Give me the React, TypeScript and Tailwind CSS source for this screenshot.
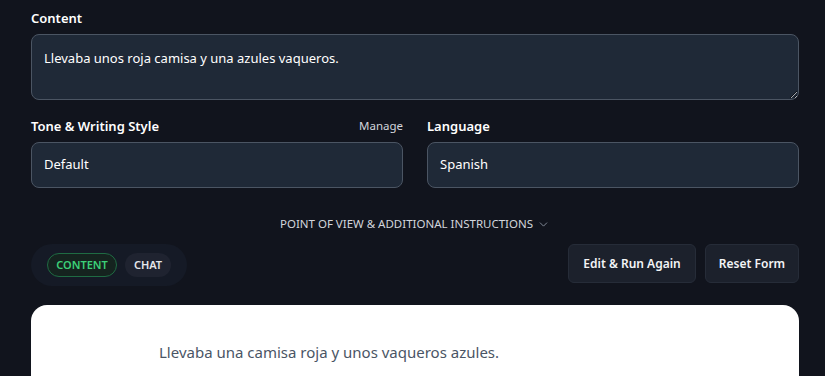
import { ChevronDown } from 'lucide-react'

const font = { fontFamily: '"Noto Sans", "Open Sans", sans-serif' }

export default function App() {
  return (
    <div className="h-[376px] overflow-hidden bg-[#11141d] pl-[31px] pr-[26px] pt-[9px]" style={font}>
      <label className="block text-[13px] font-semibold leading-[18px] text-white">Content</label>
      <textarea
        className="mt-[7px] block h-[66px] w-full resize-y rounded-lg border border-[#4b5563] bg-[#1f2937] px-3 py-[13px] text-[13px] leading-5 text-white outline-none"
        defaultValue="Llevaba unos roja camisa y una azules vaqueros."
      />

      <div className="mt-[17px] grid grid-cols-2 gap-6">
        <div>
          <div className="flex h-[18px] items-center justify-between">
            <span className="text-[13px] font-semibold leading-[18px] text-white">Tone &amp; Writing Style</span>
            <span className="text-[11.5px] leading-[18px] text-gray-300">Manage</span>
          </div>
          <div className="mt-[7px] flex h-[46px] items-center rounded-lg border border-[#4b5563] bg-[#1f2937] px-3 text-[13px] text-white">
            Default
          </div>
        </div>
        <div>
          <div className="h-[18px] text-[13px] font-semibold leading-[18px] text-white">Language</div>
          <div className="mt-[7px] flex h-[46px] items-center rounded-lg border border-[#4b5563] bg-[#1f2937] px-3 text-[13px] text-white">
            Spanish
          </div>
        </div>
      </div>

      <div className="mt-[28px] flex items-center justify-center gap-1 text-[11.5px] leading-4 text-gray-300">
        POINT OF VIEW &amp; ADDITIONAL INSTRUCTIONS
        <ChevronDown size={13} strokeWidth={1.5} className="text-gray-400" />
      </div>

      <div className="mt-[12px] flex items-start justify-between">
        <div className="flex w-[156px] items-center gap-2 rounded-full bg-[#151a26] px-4 py-[9px]">
          <span className="flex h-[24px] w-[70px] items-center justify-center rounded-full border border-[#1f6b43] bg-[#15231f] text-[11px] font-semibold text-[#3ccf78]">
            CONTENT
          </span>
          <span className="flex h-[24px] w-[46px] items-center justify-center rounded-full bg-[#1f2330] text-[11px] font-semibold text-gray-200">
            CHAT
          </span>
        </div>
        <div className="flex items-center gap-[9px]">
          <button className="h-[39px] w-[128px] rounded-md border border-[#262c38] bg-[#1c212c] text-[12px] font-semibold text-gray-100">
            Edit &amp; Run Again
          </button>
          <button className="h-[39px] w-[94px] rounded-md border border-[#262c38] bg-[#1c212c] text-[12px] font-semibold text-gray-100">
            Reset Form
          </button>
        </div>
      </div>

      <div className="mt-[19px] h-[120px] rounded-t-[16px] bg-white pl-[128px] pt-[35px]">
        <p className="text-[15px] leading-6 text-gray-600">Llevaba una camisa roja y unos vaqueros azules.</p>
      </div>
    </div>
  )
}
